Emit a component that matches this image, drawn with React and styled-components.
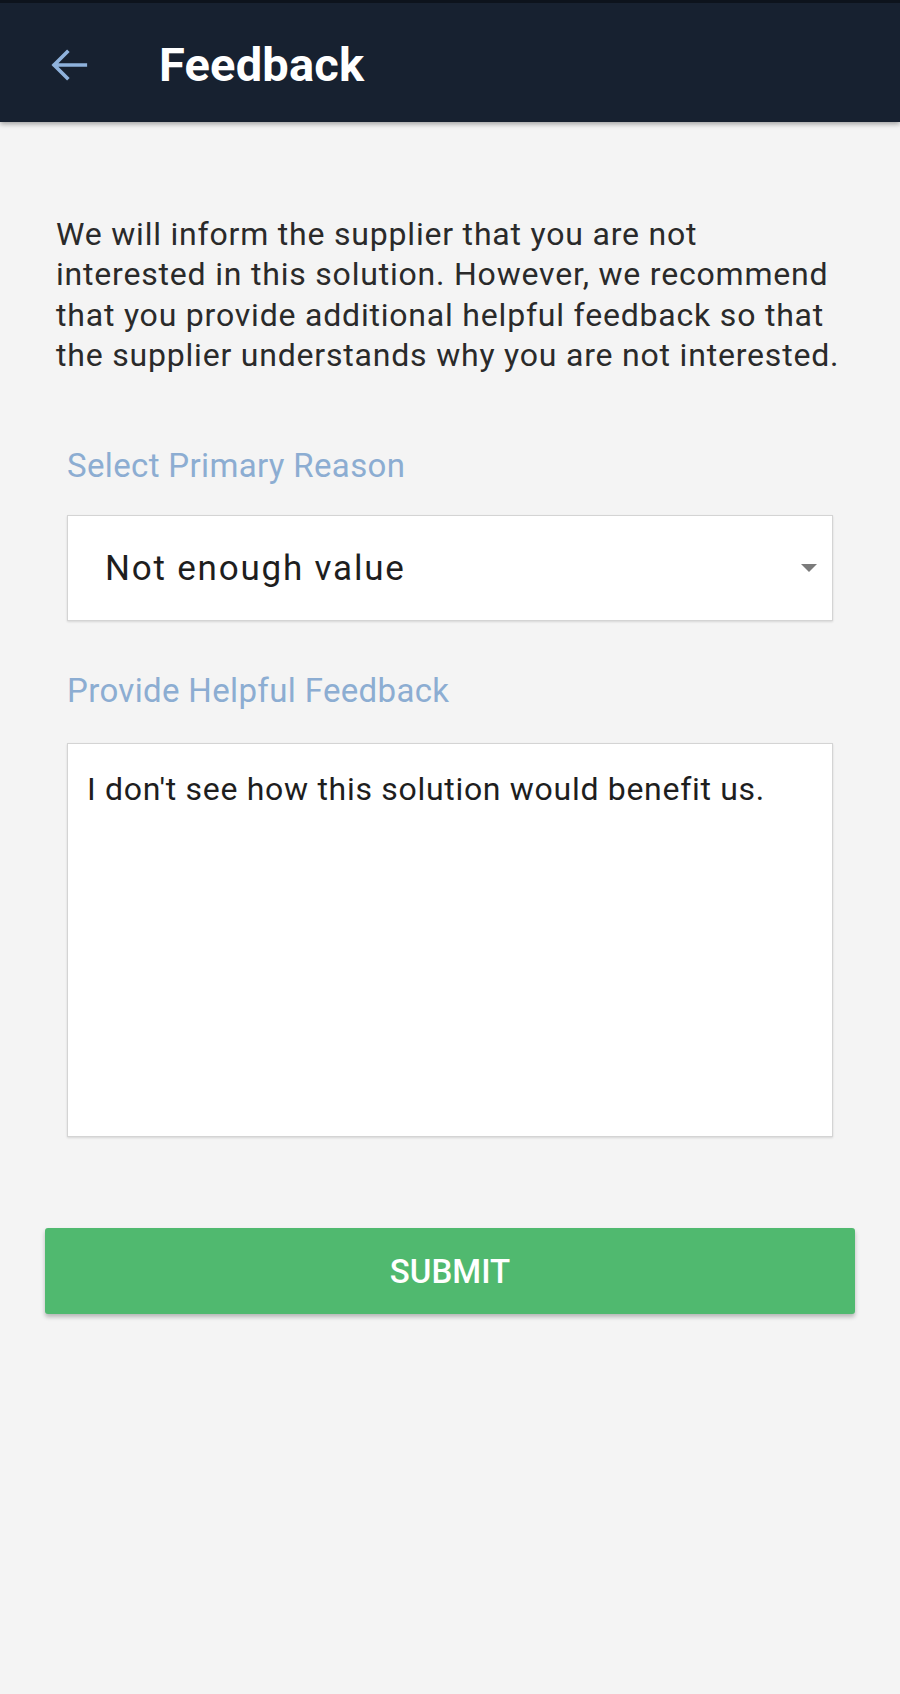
import React from "react";
import styled, { createGlobalStyle } from "styled-components";

const GlobalStyle = createGlobalStyle`
  html, body {
    margin: 0;
    padding: 0;
    background: #f4f4f4;
    font-family: Roboto, "Liberation Sans", sans-serif;
  }
`;

const Page = styled.div`
  min-height: 1694px;
  background: #f4f4f4;
`;

const Header = styled.header`
  display: flex;
  align-items: center;
  height: 122px;
  padding: 4px 0 0 46px;
  background: #172130;
  border-top: 3px solid #0d131c;
  box-sizing: border-box;
  box-shadow: 0 2px 5px rgba(0, 0, 0, 0.35);
`;

const BackButton = styled.button`
  display: flex;
  align-items: center;
  justify-content: center;
  width: 46px;
  height: 46px;
  padding: 0;
  border: none;
  background: none;
  margin-right: 67px;
`;

const Title = styled.h1`
  margin: 0;
  color: #ffffff;
  font-size: 47px;
  font-weight: 700;
  letter-spacing: 0.2px;
`;

const Content = styled.main`
  display: flex;
  flex-direction: column;
  padding: 92px 45px 0;
`;

const Intro = styled.p`
  margin: 0 0 71px 11px;
  color: #2a2a2a;
  font-size: 32px;
  line-height: 40.3px;
  letter-spacing: 0.8px;
  white-space: nowrap;
`;

const Field = styled.div`
  display: flex;
  flex-direction: column;
  padding: 0 22px;
  margin-bottom: ${({ gap }) => gap}px;
`;

const Label = styled.label`
  color: #8cadd2;
  font-size: 33px;
  line-height: 40px;
  letter-spacing: 0.35px;
  margin-bottom: ${({ gap }) => gap}px;
`;

const Box = styled.div`
  position: relative;
  background: #ffffff;
  border: 1px solid #d4d4d4;
  box-shadow: 0 1px 2px rgba(0, 0, 0, 0.12);
  box-sizing: border-box;
`;

const SelectBox = styled(Box)`
  display: flex;
  align-items: center;
  justify-content: space-between;
  height: 106px;
  padding: 0 15px 0 37px;
`;

const SelectValue = styled.span`
  color: #1e1e1e;
  font-size: 35px;
  letter-spacing: 1.8px;
`;

const Caret = styled.span`
  width: 0;
  height: 0;
  border-left: 8px solid transparent;
  border-right: 8px solid transparent;
  border-top: 8px solid #7b7b7b;
`;

const TextBox = styled(Box)`
  height: 394px;
  padding: 24px 19px;
  color: #1e1e1e;
  font-size: 32px;
  line-height: 42px;
  letter-spacing: 0.7px;
`;

const SubmitButton = styled.button`
  height: 86px;
  border: none;
  border-radius: 3px;
  background: #50b96f;
  color: #ffffff;
  font-family: Roboto, "Liberation Sans", sans-serif;
  font-size: 33px;
  font-weight: 500;
  box-shadow: 0 3px 4px rgba(0, 0, 0, 0.25);
`;

const BackArrow = () => (
  <svg width="46" height="46" viewBox="0 0 24 24" fill="none">
    <path
      d="M20.5 12H4.5M11 5.2l-6.8 6.8 6.8 6.8"
      stroke="#8fb2dc"
      strokeWidth="1.9"
      strokeLinecap="square"
    />
  </svg>
);

const App = () => {
  return (
    <Page>
      <GlobalStyle />
      <Header>
        <BackButton>
          <BackArrow />
        </BackButton>
        <Title>Feedback</Title>
      </Header>
      <Content>
        <Intro>
          We will inform the supplier that you are not
          <br />
          interested in this solution. However, we recommend
          <br />
          that you provide additional helpful feedback so that
          <br />
          the supplier understands why you are not interested.
        </Intro>
        <Field gap={50}>
          <Label gap={29}>Select Primary Reason</Label>
          <SelectBox>
            <SelectValue>Not enough value</SelectValue>
            <Caret />
          </SelectBox>
        </Field>
        <Field gap={91}>
          <Label gap={32}>Provide Helpful Feedback</Label>
          <TextBox>I don't see how this solution would benefit us.</TextBox>
        </Field>
        <SubmitButton>SUBMIT</SubmitButton>
      </Content>
    </Page>
  );
};

export default App;
